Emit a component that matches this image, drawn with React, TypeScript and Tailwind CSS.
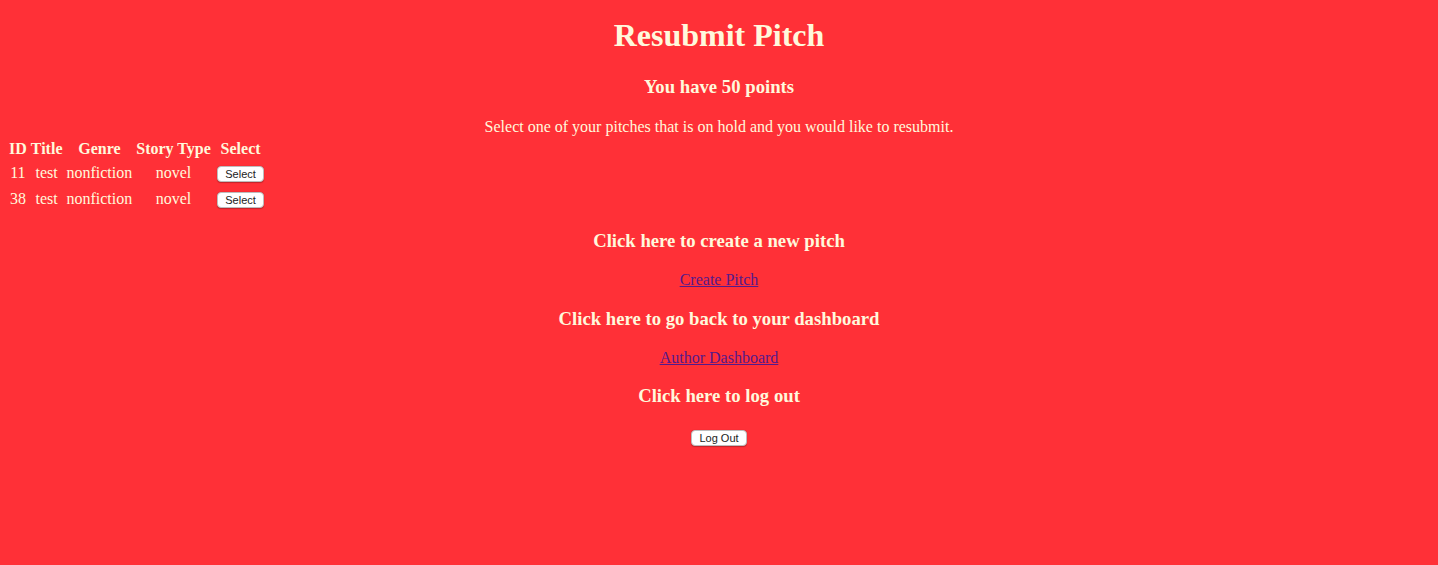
const pitches = [
  { id: 11, title: "test", genre: "nonfiction", storyType: "novel" },
  { id: 38, title: "test", genre: "nonfiction", storyType: "novel" },
];

function SmallButton({ label, className = "" }: { label: string; className?: string }) {
  return (
    <button
      className={
        "h-4 rounded-[4px] border border-[#bdbdbd] bg-white px-[7.5px] font-['Liberation_Sans',Arial,sans-serif] text-[11px] leading-[14px] text-[#222] shadow-[0_0.5px_1px_rgba(0,0,0,0.25)] " +
        className
      }
    >
      {label}
    </button>
  );
}

export default function App() {
  return (
    <div className="min-h-screen w-full bg-[#ff3037] font-['Liberation_Serif','Times_New_Roman',serif] text-[#fff8dc]">
      <h1 className="pt-[17px] text-center text-[32px] font-bold leading-[36px]">
        Resubmit Pitch
      </h1>
      <h3 className="mt-[23px] text-center text-[18.72px] font-bold leading-[22px]">
        You have 50 points
      </h3>
      <p className="mt-[20px] text-center text-[16px] leading-[18px]">
        Select one of your pitches that is on hold and you would like to resubmit.
      </p>

      {/* tabela de pitches */}
      <table className="ml-[6px] border-separate border-spacing-[2px] text-[16px]">
        <thead>
          <tr>
            <th className="px-px py-px text-center leading-[19px]">ID</th>
            <th className="px-px py-px text-center leading-[19px]">Title</th>
            <th className="px-px py-px text-center leading-[19px]">Genre</th>
            <th className="px-px py-px text-center leading-[19px]">Story Type</th>
            <th className="px-px py-px text-center leading-[19px]">Select</th>
          </tr>
        </thead>
        <tbody>
          {pitches.map((p) => (
            <tr key={p.id}>
              <td className="px-px py-px text-center align-middle leading-[22px]">{p.id}</td>
              <td className="px-px py-px text-center align-middle leading-[22px]">{p.title}</td>
              <td className="px-px py-px text-center align-middle leading-[22px]">{p.genre}</td>
              <td className="px-px py-px text-center align-middle leading-[22px]">{p.storyType}</td>
              <td className="px-px py-px text-center align-middle leading-[22px]">
                <SmallButton label="Select" className="mx-[2px]" />
              </td>
            </tr>
          ))}
        </tbody>
      </table>

      <h3 className="mt-[17px] text-center text-[18.72px] font-bold leading-[22px]">
        Click here to create a new pitch
      </h3>
      <p className="mt-[19px] text-center text-[16px] leading-[18px]">
        <a href="#" className="text-[#551a8b] underline">
          Create Pitch
        </a>
      </p>
      <h3 className="mt-[19px] text-center text-[18.72px] font-bold leading-[22px]">
        Click here to go back to your dashboard
      </h3>
      <p className="mt-[19px] text-center text-[16px] leading-[18px]">
        <a href="#" className="text-[#551a8b] underline">
          Author Dashboard
        </a>
      </p>
      <h3 className="mt-[18px] text-center text-[18.72px] font-bold leading-[22px]">
        Click here to log out
      </h3>
      <div className="mt-[23px] flex justify-center">
        <SmallButton label="Log Out" />
      </div>
    </div>
  );
}
